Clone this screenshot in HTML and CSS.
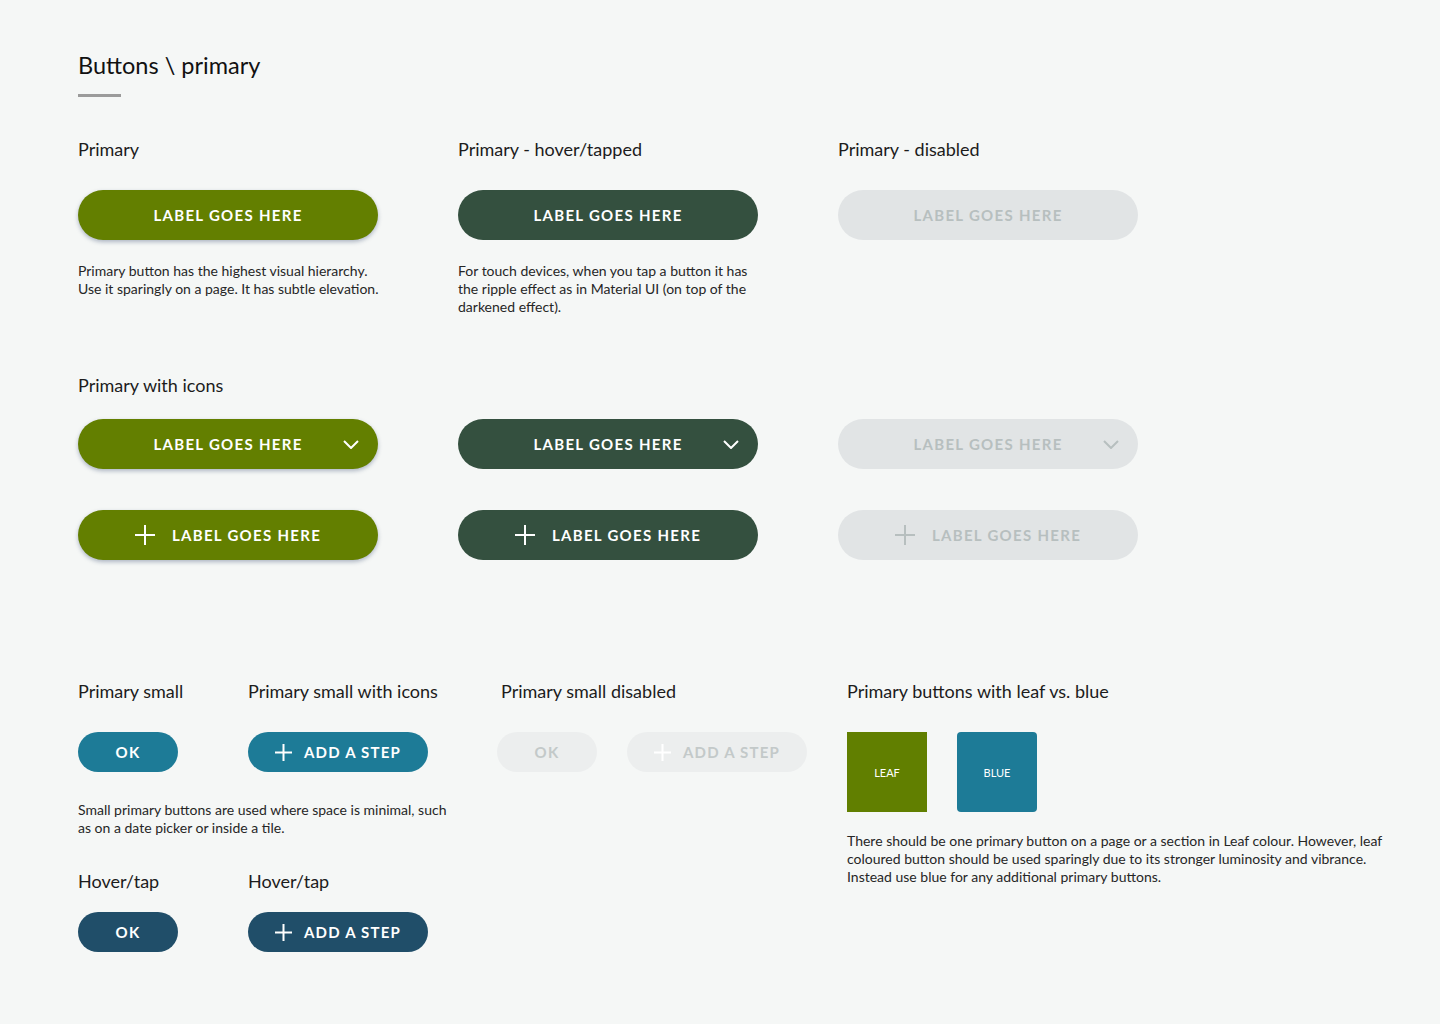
FILE: index.html
```html
<!DOCTYPE html>
<html>
<head>
  <title>Buttons \ primary</title>
  <link rel="stylesheet" href="styles.css">
</head>
<body>
  <div class="page">
    <h1 class="page-title">Buttons \ primary</h1>
    <div class="title-rule"></div>

    <!-- Large primary buttons -->
    <div class="large-grid">
      <div class="col">
        <h2 class="section-label">Primary</h2>
        <button class="btn btn-leaf">Label goes here</button>
        <p class="note">Primary button has the highest visual hierarchy.<br>Use it sparingly on a page. It has subtle elevation.</p>
      </div>
      <div class="col">
        <h2 class="section-label">Primary - hover/tapped</h2>
        <button class="btn btn-forest">Label goes here</button>
        <p class="note">For touch devices, when you tap a button it has<br>the ripple effect as in Material UI (on top of the<br>darkened effect).</p>
      </div>
      <div class="col">
        <h2 class="section-label">Primary - disabled</h2>
        <button class="btn btn-disabled">Label goes here</button>
      </div>
    </div>

    <h2 class="section-label icons-label">Primary with icons</h2>
    <div class="icon-grid">
      <button class="btn btn-leaf btn-dropdown">Label goes here
        <svg class="chevron" width="16" height="9" viewBox="0 0 16 9"><path d="M1 1l7 7 7-7" fill="none" stroke="currentColor" stroke-width="2"/></svg>
      </button>
      <button class="btn btn-forest btn-dropdown">Label goes here
        <svg class="chevron" width="16" height="9" viewBox="0 0 16 9"><path d="M1 1l7 7 7-7" fill="none" stroke="currentColor" stroke-width="2"/></svg>
      </button>
      <button class="btn btn-disabled btn-dropdown">Label goes here
        <svg class="chevron" width="16" height="9" viewBox="0 0 16 9"><path d="M1 1l7 7 7-7" fill="none" stroke="currentColor" stroke-width="2"/></svg>
      </button>

      <button class="btn btn-leaf">
        <svg class="plus" width="20" height="20" viewBox="0 0 20 20"><path d="M10 0v20M0 10h20" stroke="currentColor" stroke-width="2"/></svg>
        Label goes here
      </button>
      <button class="btn btn-forest">
        <svg class="plus" width="20" height="20" viewBox="0 0 20 20"><path d="M10 0v20M0 10h20" stroke="currentColor" stroke-width="2"/></svg>
        Label goes here
      </button>
      <button class="btn btn-disabled">
        <svg class="plus" width="20" height="20" viewBox="0 0 20 20"><path d="M10 0v20M0 10h20" stroke="currentColor" stroke-width="2"/></svg>
        Label goes here
      </button>
    </div>

    <!-- Small buttons -->
    <div class="small-section">
      <div class="small-block">
        <div class="small-row">
          <div class="small-col-ok">
            <h2 class="section-label">Primary small</h2>
            <button class="btn-sm btn-blue btn-ok">OK</button>
          </div>
          <div>
            <h2 class="section-label">Primary small with icons</h2>
            <button class="btn-sm btn-blue btn-step">
              <svg class="plus-sm" width="17" height="17" viewBox="0 0 17 17"><path d="M8.5 0v17M0 8.5h17" stroke="currentColor" stroke-width="2"/></svg>
              Add a step
            </button>
          </div>
        </div>
        <p class="note small-note">Small primary buttons are used where space is minimal, such<br>as on a date picker or inside a tile.</p>
        <div class="small-row hover-row">
          <div class="small-col-ok">
            <h2 class="section-label">Hover/tap</h2>
            <button class="btn-sm btn-navy btn-ok">OK</button>
          </div>
          <div>
            <h2 class="section-label">Hover/tap</h2>
            <button class="btn-sm btn-navy btn-step">
              <svg class="plus-sm" width="17" height="17" viewBox="0 0 17 17"><path d="M8.5 0v17M0 8.5h17" stroke="currentColor" stroke-width="2"/></svg>
              Add a step
            </button>
          </div>
        </div>
      </div>

      <div class="disabled-block">
        <h2 class="section-label">Primary small disabled</h2>
        <div class="disabled-row">
          <button class="btn-sm btn-sm-disabled btn-ok">OK</button>
          <button class="btn-sm btn-sm-disabled btn-step">
            <svg class="plus-sm" width="17" height="17" viewBox="0 0 17 17"><path d="M8.5 0v17M0 8.5h17" stroke="currentColor" stroke-width="2"/></svg>
            Add a step
          </button>
        </div>
      </div>

      <div class="swatch-block">
        <h2 class="section-label">Primary buttons with leaf vs. blue</h2>
        <div class="swatch-row">
          <div class="swatch swatch-leaf">LEAF</div>
          <div class="swatch swatch-blue">BLUE</div>
        </div>
        <p class="note">There should be one primary button on a page or a section in Leaf colour. However, leaf<br>coloured button should be used sparingly due to its stronger luminosity and vibrance.<br>Instead use blue for any additional primary buttons.</p>
      </div>
    </div>
  </div>
</body>
</html>
```

FILE: styles.css
```css
/* Buttons \ primary spec sheet */
body {
  margin: 0;
  background-color: #f5f7f6;
  font-family: Lato, "Open Sans", Arial, sans-serif;
  color: #1c1c1c;
}

.page {
  padding: 50px 78px 60px;
}

.page-title {
  margin: 0;
  font-size: 23.5px;
  line-height: 30px;
  font-weight: 400;
  color: #111;
}

.title-rule {
  width: 43px;
  height: 3px;
  margin-top: 14px;
  background-color: #9b9b9b;
}

.section-label {
  margin: 0;
  font-size: 18px;
  line-height: 24px;
  font-weight: 400;
  color: #1c1c1c;
}

.note {
  margin: 0;
  font-size: 14px;
  line-height: 18px;
  color: #262626;
  white-space: nowrap;
}

/* large buttons */
.large-grid {
  display: grid;
  grid-template-columns: 300px 300px 300px;
  column-gap: 80px;
  margin-top: 40px;
}

.large-grid .btn {
  margin-top: 29px;
  margin-bottom: 22px;
}

.btn {
  display: flex;
  align-items: center;
  justify-content: center;
  gap: 17px;
  position: relative;
  width: 300px;
  height: 50px;
  padding: 0;
  border: none;
  border-radius: 25px;
  font-family: inherit;
  font-size: 15px;
  font-weight: 700;
  letter-spacing: 1.3px;
  text-transform: uppercase;
  color: #fff;
}

.btn-leaf {
  background-color: #637f00;
  box-shadow: 0 2px 4px rgba(40, 60, 100, 0.35);
}

.btn-forest {
  background-color: #34503f;
}

.btn-disabled {
  background-color: #e1e4e5;
  color: #b7bfbf;
}

.btn-dropdown .chevron {
  position: absolute;
  right: 19px;
  top: 21px;
}

.icons-label {
  margin-top: 57px;
}

.icon-grid {
  display: grid;
  grid-template-columns: 300px 300px 300px;
  column-gap: 80px;
  row-gap: 41px;
  margin-top: 22px;
}

/* small buttons */
.small-section {
  display: flex;
  margin-top: 119px;
}

.small-block {
  flex-shrink: 0;
  width: 419px;
}

.small-row {
  display: flex;
}

.small-col-ok {
  width: 170px;
}

.small-row .btn-sm {
  margin-top: 29px;
}

.hover-row {
  margin-top: 32px;
}

.hover-row .btn-sm {
  margin-top: 19px;
}

.small-note {
  margin-top: 29px;
}

.btn-sm {
  display: flex;
  align-items: center;
  justify-content: center;
  gap: 12px;
  height: 40px;
  padding: 0;
  border: none;
  border-radius: 20px;
  font-family: inherit;
  font-size: 15px;
  font-weight: 700;
  letter-spacing: 1.2px;
  text-transform: uppercase;
  color: #fff;
}

.btn-ok {
  width: 100px;
}

.btn-step {
  width: 180px;
}

.btn-blue {
  background-color: #1d7b97;
}

.btn-navy {
  background-color: #204e69;
}

.btn-sm-disabled {
  background-color: #eceeee;
  color: #c3c9c9;
}

.btn-sm-disabled .plus-sm {
  color: #fff;
}

.disabled-block {
  flex-shrink: 0;
  width: 350px;
}

.disabled-block .section-label {
  padding-left: 4px;
}

.disabled-row {
  display: flex;
  gap: 30px;
  margin-top: 29px;
}

.swatch-block {
  flex: 1;
  min-width: 0;
}

.swatch-row {
  display: flex;
  gap: 30px;
  margin-top: 29px;
}

.swatch {
  display: flex;
  align-items: center;
  justify-content: center;
  width: 80px;
  height: 80px;
  font-size: 11px;
  color: #fff;
}

.swatch-leaf {
  background-color: #617f00;
}

.swatch-blue {
  background-color: #1d7b97;
  border-radius: 4px;
}

.swatch-block .note {
  margin-top: 20px;
}
```
